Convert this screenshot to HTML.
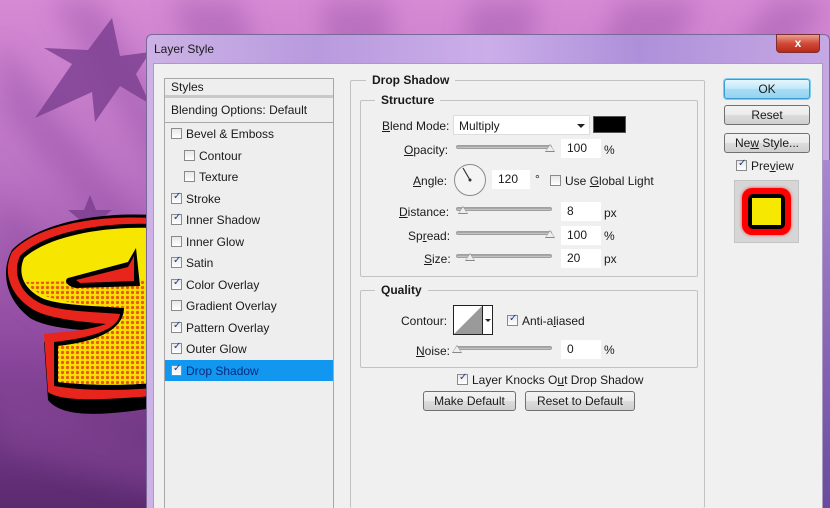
<!DOCTYPE html>
<html><head><meta charset="utf-8"><style>
*{margin:0;padding:0;box-sizing:border-box}
html,body{width:830px;height:508px;overflow:hidden}
body{position:relative;font-family:"Liberation Sans","DejaVu Sans",sans-serif;font-size:12px;color:#1a1a1a;background:#9a55a8}
.a{position:absolute}
.t{position:absolute;white-space:nowrap;font-size:12px}
.cb{position:absolute;width:11px;height:11px;border:1px solid #8a8a8a;background:linear-gradient(#e8e8e8,#fff)}
.cb.on::after{content:"✓";position:absolute;left:1px;top:-3px;font-size:10px;color:#1e3a8a;font-weight:bold}
.row{position:absolute;left:165px;width:168px;height:21px;border-bottom:1px solid #e2e2e2}
.fs{position:absolute;border:1px solid #c2c2c2;border-radius:2px}
.lg{position:absolute;background:#f0f0f0;padding:0 6px;font-weight:bold;font-size:12px;top:-8px}
.inp{position:absolute;background:#fff;height:19px;padding:2px 0 0 6px;font-size:12px}
.track{position:absolute;height:4px;border-radius:2px;background:linear-gradient(#9a9a9a,#d0d0d0);border:1px solid #9f9f9f}
.thumb{position:absolute;width:0;height:0;border-left:5px solid transparent;border-right:5px solid transparent;border-bottom:8px solid #888}
.thumb::after{content:"";position:absolute;left:-4px;top:1px;border-left:4px solid transparent;border-right:4px solid transparent;border-bottom:6px solid #eee}
.btn{position:absolute;height:20px;border:1px solid #707070;border-radius:3px;background:linear-gradient(#f2f2f2,#ebebeb 50%,#dcdcdc 51%,#cfcfcf);text-align:center;font-size:12px;line-height:18px}
u{text-decoration:underline}
</style></head><body>
<svg class="a" style="left:0;top:0" width="830" height="508">
<defs>
<linearGradient id="g" x1="0" y1="0" x2="0" y2="1"><stop offset="0" stop-color="#d68ad4"/><stop offset=".35" stop-color="#b972c2"/><stop offset=".7" stop-color="#8a479c"/><stop offset="1" stop-color="#5a2a6e"/></linearGradient>
<filter id="b"><feGaussianBlur stdDeviation="12"/></filter>
<pattern id="dots" width="5" height="5" patternUnits="userSpaceOnUse"><rect width="5" height="5" fill="#f7e000"/><circle cx="2.5" cy="2.5" r="1.6" fill="#e8401a"/></pattern>
</defs>
<rect width="830" height="508" fill="url(#g)"/>
<g fill="#8e4aa0" opacity=".35" filter="url(#b)">
<polygon points="400,560 170,0 240,0"/><polygon points="400,560 320,0 390,0"/><polygon points="400,560 470,0 540,0"/><polygon points="400,560 620,0 700,0"/><polygon points="400,560 770,0 830,0"/><polygon points="400,560 0,40 0,110"/><polygon points="400,560 0,200 0,280"/><polygon points="400,560 0,380 0,450"/><polygon points="400,560 50,0 100,0"/>
</g>
<polygon fill="#7a3f90" opacity=".8" points="112,18 120,56 150,52 136,74 150,104 120,86 95,122 92,92 35,118 72,64 44,48 88,50"/>
<polygon fill="#74388a" opacity=".7" points="90,195 96,210 112,210 100,220 106,236 90,226 76,236 80,220 68,210 84,210"/>
<path d="M153,215 C100,212 40,222 12,250 C0,272 6,300 30,318 C50,330 90,330 106,332 C80,340 55,340 44,342 L48,400 C60,415 90,418 153,408 Z" fill="#000"/>
<path d="M153,218 C100,215 38,224 12,252 C2,272 10,296 34,310 C52,320 88,322 106,324 C84,332 56,332 44,334 L48,392 C62,402 100,400 153,396 Z" fill="#e8251c"/>
<path d="M153,224 C102,222 44,232 20,256 C12,274 20,294 42,304 C62,312 100,312 120,314 C118,330 90,338 54,342 L54,386 C90,392 130,390 153,388 Z" fill="#000"/>
<path d="M153,228 C104,226 48,236 24,258 C17,274 24,290 44,299 C64,306 100,306 124,308 C124,330 96,342 58,346 L58,382 C92,386 130,385 153,383 Z" fill="#f7e600"/>
<path d="M26,282 C34,296 60,304 124,308 C124,330 96,342 58,346 L58,382 C92,386 130,385 153,383 L153,280 Z" fill="url(#dots)" opacity=".85"/>
<path d="M68,278 L128,262 L136,248 L140,286 L76,288 C66,286 64,280 68,278Z" fill="#000"/>
<path d="M76,280 L128,267 L134,256 L134,281 L80,283Z" fill="#e8251c"/>
</svg>
<div class="a" style="left:146px;top:34px;width:684px;height:474px;border:1px solid #7a6898;border-bottom:none;border-radius:6px 6px 0 0;background:linear-gradient(90deg,#cdb2e6,#b89ade 25%,#cbaee9 50%,#ae90da 72%,#c6a8e4)"></div>
<div class="t" style="left:154px;top:42px">Layer Style</div>
<div class="a" style="left:776px;top:34px;width:44px;height:19px;border:1px solid #7a3030;border-radius:0 0 4px 4px;background:linear-gradient(#e8a090,#d24a38 50%,#b82818);color:#fff;text-align:center;font-weight:bold;font-size:12px;line-height:17px">x</div>
<div class="a" style="left:153px;top:63px;width:670px;height:445px;background:#f0f0f0;border:1px solid #a99cc0;border-bottom:none"></div>
<div class="a" style="left:823px;top:160px;width:7px;height:348px;background:linear-gradient(#a888d0,#6a4a9c)"></div>
<div class="a" style="left:164px;top:78px;width:170px;height:430px;border:1px solid #a8a8a8;border-bottom:none;background:#eeeeee"></div>
<div class="row" style="top:79px;height:19px;border-bottom:3px solid #c9c9c9"></div><div class="t" style="left:171px;top:80px">Styles</div>
<div class="row" style="top:99px;height:24px;border-bottom:1px solid #a8a8a8"></div><div class="t" style="left:171px;top:103px">Blending Options: Default</div>
<div class="cb" style="left:171px;top:128px"></div><div class="t" style="left:186px;top:127px">Bevel &amp; Emboss</div>
<div class="cb" style="left:184px;top:150px"></div><div class="t" style="left:199px;top:149px">Contour</div>
<div class="cb" style="left:184px;top:171px"></div><div class="t" style="left:199px;top:170px">Texture</div>
<div class="cb on" style="left:171px;top:193px"></div><div class="t" style="left:186px;top:192px">Stroke</div>
<div class="cb on" style="left:171px;top:214px"></div><div class="t" style="left:186px;top:213px">Inner Shadow</div>
<div class="cb" style="left:171px;top:236px"></div><div class="t" style="left:186px;top:235px">Inner Glow</div>
<div class="cb on" style="left:171px;top:257px"></div><div class="t" style="left:186px;top:256px">Satin</div>
<div class="cb on" style="left:171px;top:279px"></div><div class="t" style="left:186px;top:278px">Color Overlay</div>
<div class="cb" style="left:171px;top:300px"></div><div class="t" style="left:186px;top:299px">Gradient Overlay</div>
<div class="cb on" style="left:171px;top:322px"></div><div class="t" style="left:186px;top:321px">Pattern Overlay</div>
<div class="cb on" style="left:171px;top:343px"></div><div class="t" style="left:186px;top:342px">Outer Glow</div>
<div class="a" style="left:165px;top:360px;width:168px;height:21px;background:#1197f0"></div>
<div class="cb on" style="left:171px;top:365px"></div><div class="t" style="left:186px;top:364px;color:#0a2a7a">Drop Shadow</div>
<div class="fs" style="left:350px;top:80px;width:355px;height:428px;border-bottom:none"><div class="lg" style="left:15px">Drop Shadow</div></div>
<div class="fs" style="left:360px;top:100px;width:338px;height:177px"><div class="lg" style="left:14px">Structure</div></div>
<div class="t" style="left:382px;top:119px"><u>B</u>lend Mode:</div>
<div class="a" style="left:453px;top:115px;width:137px;height:20px;background:#fff;border:1px solid #ddd"></div>
<div class="t" style="left:459px;top:119px">Multiply</div>
<div class="a" style="left:577px;top:124px;border-left:4px solid transparent;border-right:4px solid transparent;border-top:4px solid #222"></div>
<div class="a" style="left:593px;top:116px;width:33px;height:17px;background:#000;border:1px solid #555"></div>
<div class="t" style="left:404px;top:143px"><u>O</u>pacity:</div>
<div class="track" style="left:456px;top:145px;width:96px"></div><div class="thumb" style="left:545px;top:144px"></div>
<div class="inp" style="left:561px;top:139px;width:40px">100</div><div class="t" style="left:604px;top:143px">%</div>
<div class="t" style="left:413px;top:174px"><u>A</u>ngle:</div>
<svg class="a" style="left:453px;top:163px" width="34" height="34"><circle cx="17" cy="17" r="15.5" fill="#f4f4f4" stroke="#8a8a8a"/><line x1="17" y1="17" x2="10" y2="5" stroke="#333" stroke-width="1.2"/><circle cx="17" cy="17" r="1.5" fill="#333"/></svg>
<div class="inp" style="left:492px;top:170px;width:38px">120</div><div class="t" style="left:535px;top:172px">°</div>
<div class="cb" style="left:550px;top:175px"></div><div class="t" style="left:565px;top:174px">Use <u>G</u>lobal Light</div>
<div class="t" style="left:399px;top:205px"><u>D</u>istance:</div>
<div class="track" style="left:456px;top:207px;width:96px"></div><div class="thumb" style="left:458px;top:206px"></div>
<div class="inp" style="left:561px;top:202px;width:40px">8</div><div class="t" style="left:604px;top:206px">px</div>
<div class="t" style="left:408px;top:229px">Sp<u>r</u>ead:</div>
<div class="track" style="left:456px;top:231px;width:96px"></div><div class="thumb" style="left:545px;top:230px"></div>
<div class="inp" style="left:561px;top:226px;width:40px">100</div><div class="t" style="left:604px;top:229px">%</div>
<div class="t" style="left:424px;top:252px"><u>S</u>ize:</div>
<div class="track" style="left:456px;top:254px;width:96px"></div><div class="thumb" style="left:465px;top:253px"></div>
<div class="inp" style="left:561px;top:249px;width:40px">20</div><div class="t" style="left:604px;top:252px">px</div>
<div class="fs" style="left:360px;top:290px;width:338px;height:78px"><div class="lg" style="left:14px">Quality</div></div>
<div class="t" style="left:401px;top:314px">Contour:</div>
<svg class="a" style="left:453px;top:305px" width="40" height="30"><rect x=".5" y=".5" width="39" height="29" fill="#fff" stroke="#222"/><polygon points="1,29 29,1 29,29" fill="#9a9a9a"/><line x1="29.5" y1="0" x2="29.5" y2="30" stroke="#222"/><polygon points="32,14 38,14 35,17" fill="#222"/></svg>
<div class="cb on" style="left:507px;top:315px"></div><div class="t" style="left:522px;top:314px">Anti-a<u>l</u>iased</div>
<div class="t" style="left:416px;top:344px"><u>N</u>oise:</div>
<div class="track" style="left:456px;top:346px;width:96px"></div><div class="thumb" style="left:452px;top:345px"></div>
<div class="inp" style="left:561px;top:340px;width:40px">0</div><div class="t" style="left:604px;top:343px">%</div>
<div class="cb on" style="left:457px;top:374px"></div><div class="t" style="left:472px;top:373px">Layer Knocks O<u>u</u>t Drop Shadow</div>
<div class="btn" style="left:423px;top:391px;width:93px">Make Default</div>
<div class="btn" style="left:525px;top:391px;width:110px">Reset to Default</div>
<div class="btn" style="left:724px;top:79px;width:86px;border-color:#3c9bd0;background:linear-gradient(#e6f6fd,#bfe7f9 50%,#a7ddf5 51%,#93d4f2);box-shadow:0 0 0 1px #7ecbf0">OK</div>
<div class="btn" style="left:724px;top:105px;width:86px">Reset</div>
<div class="btn" style="left:724px;top:133px;width:86px">Ne<u>w</u> Style...</div>
<div class="cb on" style="left:736px;top:160px"></div><div class="t" style="left:751px;top:159px">Pre<u>v</u>iew</div>
<div class="a" style="left:734px;top:180px;width:65px;height:63px;background:#d6d6d6;border:1px solid #c4c4c4"></div>
<div class="a" style="left:742px;top:188px;width:49px;height:47px;background:#f00;border-radius:10px;box-shadow:0 0 3px #f33"></div>
<div class="a" style="left:748px;top:194px;width:37px;height:35px;background:#000;border-radius:5px"></div>
<div class="a" style="left:752px;top:198px;width:29px;height:27px;background:#f6e800"></div>
</body></html>
